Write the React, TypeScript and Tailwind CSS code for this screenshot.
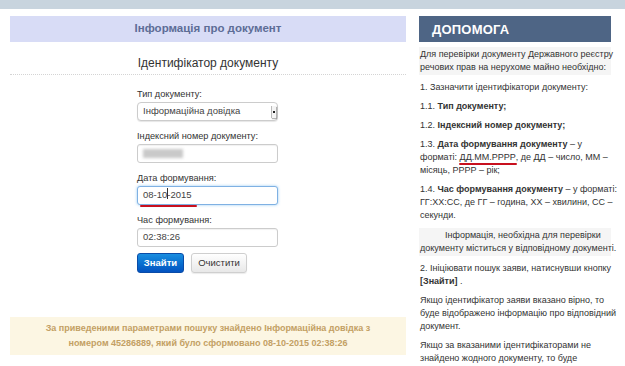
import React from "react";

const F = { fontFamily: '"Liberation Sans", Arial, sans-serif' };

function Label({ children }: { children: React.ReactNode }) {
  return <div className="text-[9.2px] leading-[12px] text-[#333]">{children}</div>;
}

function Input({ children, focus }: { children?: React.ReactNode; focus?: boolean }) {
  return (
    <div
      className={
        "relative h-[19px] w-[141px] rounded-[3px] bg-white flex items-center pl-[5px] text-[9.5px] text-[#444] " +
        (focus
          ? "border border-[#7fb1e3] shadow-[0_0_3px_rgba(82,168,236,0.6)]"
          : "border border-[#ccc] shadow-[inset_0_1px_1px_rgba(0,0,0,0.06)]")
      }
    >
      {children}
    </div>
  );
}

export default function App() {
  return (
    <div style={F} className="w-[625px] h-[366px] overflow-hidden bg-white">
      <div className="h-[9px] bg-[#c8d4de]" />
      <div className="flex pl-[10px] pt-[7px] gap-[13px]">
        {/* Left column */}
        <div className="w-[396px] flex flex-col">
          <div className="h-[26px] bg-[#d8dcf6] flex items-center justify-center text-[11.5px] font-bold text-[#5d6d96]">
            Інформація про документ
          </div>
          <div className="pt-[13px] pb-[3px] text-center text-[12px] leading-[16px] text-[#333] border-b border-dotted border-[#d4d4d4]">
            Ідентифікатор документу
          </div>
          <div className="ml-[127px] w-[141px] flex flex-col pt-[13px]">
            <Label>Тип документу:</Label>
            <div className="mt-[2px] relative h-[19px] w-[141px] rounded-[4px] bg-white border border-[#ccc] shadow-[0_1px_1px_rgba(0,0,0,0.1)] flex items-center pl-[5px] text-[9.5px] text-[#444]">
              Інформаційна довідка
              <div className="absolute right-[1px] top-[3px] w-[5px] h-[12px] bg-[#f4f4f4] border-l border-[#bbb] shadow-[1px_1px_1px_rgba(0,0,0,0.3)] flex items-center justify-center">
                <div className="w-[2px] h-[2px] bg-[#222]" />
              </div>
            </div>
            <div className="mt-[9px]">
              <Label>Індексний номер документу:</Label>
            </div>
            <div className="mt-[2px]">
              <Input>
                <div className="w-[40px] h-[9px] bg-[#c9c9c9] blur-[1.5px]" />
              </Input>
            </div>
            <div className="mt-[9px]">
              <Label>Дата формування:</Label>
            </div>
            <div className="mt-[2px]">
              <Input focus>
                <span className="relative">
                  08-10-2015
                  <span className="absolute left-[24px] top-[0px] w-[1px] h-[11px] bg-[#333]" />
                  <span className="absolute left-[-3px] right-[-5px] bottom-[-4px] h-[2px] bg-[#c8101e] rounded-full" />
                </span>
              </Input>
            </div>
            <div className="mt-[9px]">
              <Label>Час формування:</Label>
            </div>
            <div className="mt-[2px]">
              <Input>02:38:26</Input>
            </div>
            <div className="mt-[6px] flex gap-[7px]">
              <div className="w-[47px] h-[20px] rounded-[3px] bg-gradient-to-b from-[#1a8ee0] to-[#0452c0] border border-[#0a4ca8] flex items-center justify-center text-white text-[9.5px] font-bold">
                Знайти
              </div>
              <div className="w-[56px] h-[20px] rounded-[3px] bg-gradient-to-b from-white to-[#e8e8e8] border border-[#cfcfcf] shadow-[0_1px_1px_rgba(0,0,0,0.08)] flex items-center justify-center text-[#333] text-[9.5px]">
                Очистити
              </div>
            </div>
          </div>
          <div className="mt-[44px] h-[38px] bg-[#fcf6e3] flex flex-col items-center justify-center text-[9px] leading-[15px] font-bold text-[#c3a064]">
            <div>За приведеними параметрами пошуку знайдено Інформаційна довідка з</div>
            <div>номером 45286889, який було сформовано 08-10-2015 02:38:26</div>
          </div>
        </div>

        {/* Right column */}
        <div className="w-[192px] flex flex-col text-[9px] leading-[13px] text-[#333] whitespace-nowrap">
          <div className="h-[26px] bg-[#4e6585] flex items-center pl-[13px] text-[13px] font-bold text-white tracking-[0.2px]">
            ДОПОМОГА
          </div>
          <div className="mt-[5px] bg-[#f5f5f5] py-[1px] pl-[1px]">
            Для перевірки документу Державного реєстру
            <br />
            речових прав на нерухоме майно необхідно:
          </div>
          <div className="mt-[6px] pl-[1px] flex flex-col gap-[6px]">
            <div>1. Зазначити ідентифікатори документу:</div>
            <div>
              1.1. <b>Тип документу;</b>
            </div>
            <div>
              1.2. <b>Індексний номер документу;</b>
            </div>
            <div>
              1.3. <b>Дата формування документу</b> – у
              <br />
              форматі:{" "}
              <span className="relative">
                ДД.ММ.РРРР
                <span className="absolute left-[-1px] right-[-1px] bottom-[-3px] h-[2px] bg-[#c8101e] rounded-full" />
              </span>
              , де ДД – число, ММ –
              <br />
              місяць, РРРР – рік;
            </div>
            <div>
              1.4. <b>Час формування документу</b> – у форматі:
              <br />
              ГГ:ХХ:СС, де ГГ – година, ХХ – хвилини, СС –
              <br />
              секунди.
            </div>
          </div>
          <div className="mt-[6px] bg-[#f5f5f5] py-[1px] pl-[1px]">
            <span className="pl-[25px]">Інформація, необхідна для перевірки</span>
            <br />
            документу міститься у відповідному документі.
          </div>
          <div className="mt-[6px] pl-[1px] flex flex-col gap-[6px]">
            <div>
              2. Ініціювати пошук заяви, натиснувши кнопку
              <br />
              <b>[Знайти]</b> .
            </div>
            <div>
              Якщо ідентифікатор заяви вказано вірно, то
              <br />
              буде відображено інформацію про відповідний
              <br />
              документ.
            </div>
            <div>
              Якщо за вказаними ідентифікаторами не
              <br />
              знайдено жодного документу, то буде
              <br />
              відображено інформаційне повідомлення.
            </div>
          </div>
        </div>
      </div>
    </div>
  );
}
